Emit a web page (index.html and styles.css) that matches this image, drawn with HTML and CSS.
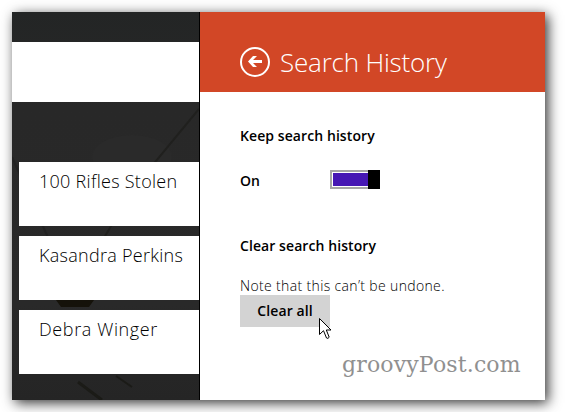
FILE: index.html
```html
<!DOCTYPE html>
<html lang="en">
<head>
    <meta charset="UTF-8">
    <meta name="viewport" content="width=device-width, initial-scale=1.0">
    <title>Search History</title>
    <link rel="stylesheet" href="styles.css">
</head>
<body>
    <div class="screen">
        <div class="results">
            <svg class="backdrop" viewBox="0 0 187 388" width="187" height="388">
                <ellipse cx="120" cy="145" rx="40" ry="22" fill="#2a2a2a"/>
                <path d="M187 97 L120 178 L78 250" stroke="#20201e" stroke-width="2" fill="none"/>
                <path d="M0 145 L38 230" stroke="#222" stroke-width="2" fill="none"/>
                <path d="M44 288 h38 l-5 7 h-28z" fill="#15120a"/>
                <path d="M66 370 l24 18" stroke="#1b1b17" stroke-width="3" fill="none"/>
                <path d="M104 364 l16 11" stroke="#1b1b17" stroke-width="2" fill="none"/>
            </svg>
            <div class="search-bar"></div>
            <ul class="result-list">
                <li class="result">100 Rifles Stolen</li>
                <li class="result">Kasandra Perkins</li>
                <li class="result result-wide">Debra Winger</li>
            </ul>
        </div>

        <div class="panel">
            <div class="panel-header">
                <svg class="back" viewBox="0 0 30 30" width="30" height="30">
                    <circle cx="15" cy="15" r="14" fill="none" stroke="#fff" stroke-width="2"/>
                    <path d="M8 14.5 L13 9 H17 L13 13 H22 V16 H13 L17 20 H13 Z" fill="#fff"/>
                </svg>
                <h1>Search History</h1>
            </div>
            <div class="panel-body">
                <h2 class="keep">Keep search history</h2>
                <div class="toggle-row">
                    <span class="toggle-label">On</span>
                    <div class="toggle"><div class="toggle-fill"></div><div class="toggle-thumb"></div></div>
                </div>
                <h2 class="clear">Clear search history</h2>
                <p class="note">Note that this can’t be undone.</p>
                <button class="clear-all">Clear all</button>
                <div class="watermark">groovyPost.com</div>
            </div>
        </div>

        <svg class="cursor" viewBox="0 0 13 22" width="13" height="22">
            <path d="M.5 .5 V16.5 L4.5 12.7 L7.5 20 Q9 21.2 10.2 19.2 L7.3 12 H12 Z" fill="#fff" stroke="#000"/>
        </svg>
    </div>
</body>
</html>
```
FILE: styles.css
```css
* {
    box-sizing: border-box;
}

body {
    margin: 0;
    padding: 12px;
    background: #fff;
    font-family: "Open Sans", "Noto Sans", sans-serif;
    color: #000;
}

h1, h2, p, ul {
    margin: 0;
    padding: 0;
}

.screen {
    position: relative;
    display: flex;
    width: 533px;
    height: 388px;
    box-shadow: 3px 3px 12px rgba(0, 0, 0, 0.8);
}

/* left side */
.results {
    position: relative;
    width: 188px;
    padding-top: 30px;
    background: linear-gradient(#232525, #282828 25%, #292929 75%, #252525);
    border-right: 1px solid #000;
}

.backdrop {
    position: absolute;
    top: 0;
    left: 0;
}

.search-bar {
    position: relative;
    height: 60px;
    background: #fff;
}

.result-list {
    position: relative;
    display: flex;
    flex-direction: column;
    gap: 10px;
    padding: 60px 0 0 7px;
    list-style: none;
}

.result {
    height: 64px;
    padding: 5px 0 0 20px;
    background: #fff;
    font-size: 18px;
    font-weight: 300;
    line-height: 28px;
    letter-spacing: 0.28px;
    white-space: nowrap;
}

.result-wide {
    letter-spacing: 0.62px;
}

/* right side */
.panel {
    flex: 1;
    background: #fff;
}

.panel-header {
    display: flex;
    gap: 10px;
    height: 80px;
    padding: 35px 0 0 40px;
    background: #d24726;
    color: #fff;
}

h1 {
    font-size: 26px;
    font-weight: 300;
    line-height: 30px;
    letter-spacing: -0.2px;
    white-space: nowrap;
}

.panel-body {
    padding: 34px 0 0 40px;
}

h2, .toggle-label, .clear-all {
    font-size: 14px;
    font-weight: 600;
    line-height: 20px;
    letter-spacing: 0.08px;
}

.toggle-row {
    display: flex;
    margin-top: 24px;
    height: 22px;
}

.toggle-label {
    width: 90px;
    padding-top: 1px;
}

.toggle {
    display: flex;
    width: 50px;
    height: 19px;
}

.toggle-fill {
    flex: 1;
    background: #4617b4;
    border: 2px solid #a6a6a6;
    border-right: 0;
    box-shadow: inset 1px 1px #fff, inset 0 -1px #fff;
}

.toggle-thumb {
    width: 12px;
    background: #000;
}

.clear {
    margin-top: 44px;
}

.note {
    margin-top: 20px;
    font-size: 14px;
    font-weight: 300;
    line-height: 20px;
    letter-spacing: 0.35px;
    white-space: nowrap;
}

.clear-all {
    display: block;
    width: 90px;
    height: 32px;
    margin-top: -1px;
    padding: 0;
    border: 0;
    background: #d3d3d3;
    color: #000;
    font-family: inherit;
}

.watermark {
    margin: 22px 0 0 102px;
    color: #909090;
    font-family: "DejaVu Serif", serif;
    font-size: 22px;
    line-height: 32px;
    letter-spacing: 0.15px;
}

.cursor {
    position: absolute;
    top: 306px;
    left: 307px;
}
```
